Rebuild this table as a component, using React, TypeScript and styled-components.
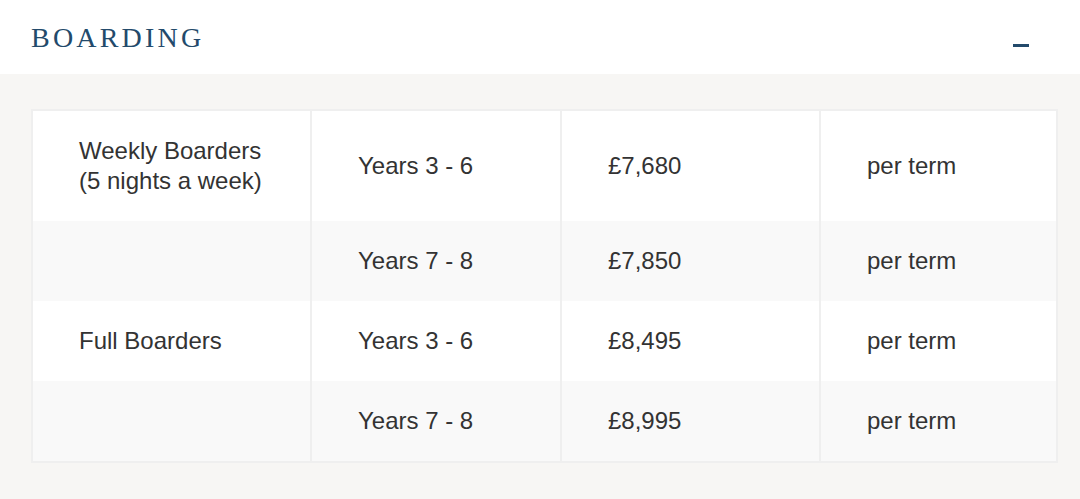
import React from 'react';
import styled, { createGlobalStyle } from 'styled-components';

const GlobalStyle = createGlobalStyle`
  html, body {
    margin: 0;
    padding: 0;
    background: #f7f6f4;
  }
`;

const Page = styled.div`
  width: 1080px;
  min-height: 499px;
  background: #f7f6f4;
`;

const Header = styled.div`
  height: 74px;
  background: #ffffff;
  display: flex;
  align-items: center;
  justify-content: space-between;
  padding: 0 51px 0 31px;
  box-sizing: border-box;
`;

const Title = styled.h2`
  margin: 0;
  padding-top: 2px;
  font-family: "Liberation Serif", "DejaVu Serif", serif;
  font-weight: normal;
  font-size: 28px;
  letter-spacing: 3.2px;
  color: #234a6b;
`;

const Toggle = styled.span`
  display: block;
  width: 16px;
  height: 3px;
  margin-top: 17px;
  background: #234a6b;
`;

const Body = styled.div`
  padding: 35px 22px 36px 31px;
`;

const Table = styled.table`
  width: 100%;
  border-collapse: collapse;
  border: 2px solid #efefef;
  font-family: "Liberation Sans", Arial, sans-serif;
  font-size: 24px;
  line-height: 30px;
  color: #333333;
`;

const Row = styled.tr<{ $shade: boolean }>`
  background: ${(p) => (p.$shade ? '#f9f9f9' : '#ffffff')};
`;

const Cell = styled.td`
  border-left: 2px solid #efefef;
  border-right: 2px solid #efefef;
  padding: 25px 46px 25px 46px;
  vertical-align: middle;
  text-align: left;
`;

const rows = [
  { group: ['Weekly Boarders', '(5 nights a week)'], years: 'Years 3 - 6', fee: '£7,680' },
  { group: [], years: 'Years 7 - 8', fee: '£7,850' },
  { group: ['Full Boarders'], years: 'Years 3 - 6', fee: '£8,495' },
  { group: [], years: 'Years 7 - 8', fee: '£8,995' },
];

export default function App() {
  return (
    <Page>
      <GlobalStyle />
      <Header>
        <Title>BOARDING</Title>
        <Toggle />
      </Header>
      <Body>
        <Table>
          <colgroup>
            <col style={{ width: 279 }} />
            <col style={{ width: 250 }} />
            <col style={{ width: 259 }} />
            <col />
          </colgroup>
          <tbody>
            {rows.map((r, i) => (
              <Row key={i} $shade={i % 2 === 1}>
                <Cell>
                  {r.group.map((line, j) => (
                    <React.Fragment key={j}>
                      {j > 0 && <br />}
                      {line}
                    </React.Fragment>
                  ))}
                </Cell>
                <Cell>{r.years}</Cell>
                <Cell>{r.fee}</Cell>
                <Cell>per term</Cell>
              </Row>
            ))}
          </tbody>
        </Table>
      </Body>
    </Page>
  );
}
